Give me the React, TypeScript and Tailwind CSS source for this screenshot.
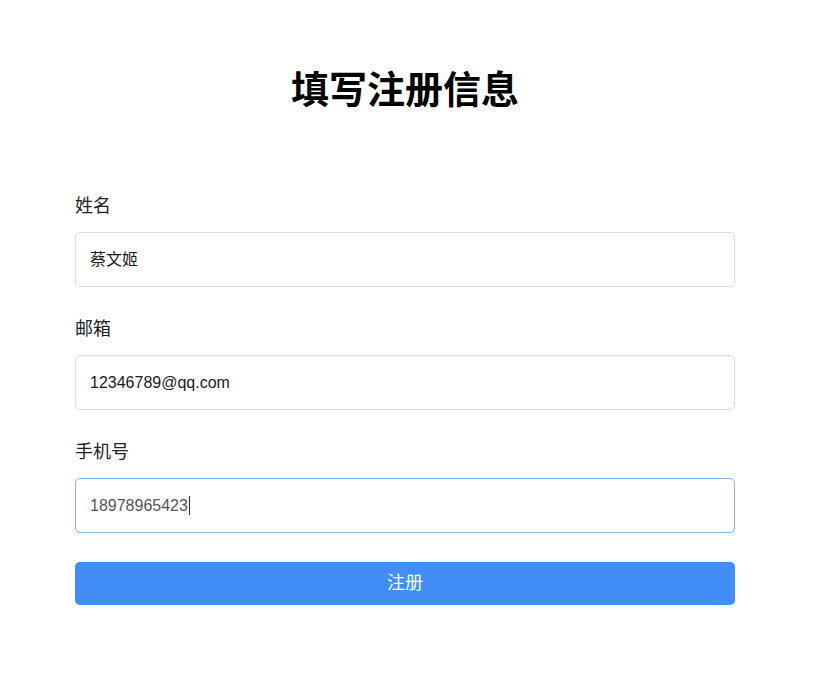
import React from "react";

const font = { fontFamily: '"Liberation Sans", "Noto Sans CJK SC", sans-serif' };

function Field({ label, value, focused, muted }: { label: string; value: string; focused?: boolean; muted?: boolean }) {
  return (
    <div className="flex flex-col">
      <div className="text-[18px] leading-[27px] text-[#222] mb-[12px]">{label}</div>
      <div
        className={
          "h-[55px] rounded-[5px] border flex items-center px-[14px] text-[16px] " +
          (focused ? "border-[#8fb5e6]" : "border-[#dcdcdc]") +
          (muted ? " text-[#555]" : " text-[#1a1a1a]")
        }
      >
        <span>{value}</span>
        {focused && <span className="inline-block w-px h-[19px] bg-[#333] ml-px" />}
      </div>
    </div>
  );
}

export default function App() {
  return (
    <div className="min-h-[687px] w-[831px] bg-white" style={font}>
      <div className="ml-[75px] w-[660px] pt-[62px]">
        <h1 className="text-center text-[38px] leading-[57px] font-bold text-black">填写注册信息</h1>
        <div className="mt-[74px] flex flex-col gap-[29px]">
          <Field label="姓名" value="蔡文姬" />
          <Field label="邮箱" value="12346789@qq.com" />
          <Field label="手机号" value="18978965423" focused muted />
        </div>
        <button className="mt-[29px] w-full h-[43px] rounded-[5px] bg-[#428ef6] text-white text-[18px]">注册</button>
      </div>
    </div>
  );
}
